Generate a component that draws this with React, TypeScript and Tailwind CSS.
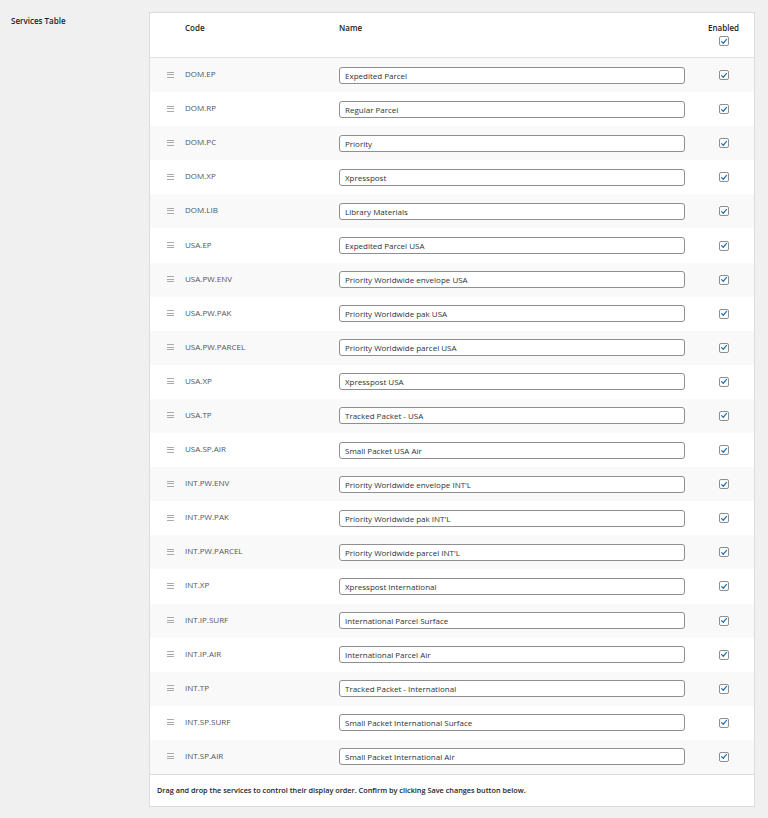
const services: [string, string][] = [
  ['DOM.EP', 'Expedited Parcel'],
  ['DOM.RP', 'Regular Parcel'],
  ['DOM.PC', 'Priority'],
  ['DOM.XP', 'Xpresspost'],
  ['DOM.LIB', 'Library Materials'],
  ['USA.EP', 'Expedited Parcel USA'],
  ['USA.PW.ENV', 'Priority Worldwide envelope USA'],
  ['USA.PW.PAK', 'Priority Worldwide pak USA'],
  ['USA.PW.PARCEL', 'Priority Worldwide parcel USA'],
  ['USA.XP', 'Xpresspost USA'],
  ['USA.TP', 'Tracked Packet - USA'],
  ['USA.SP.AIR', 'Small Packet USA Air'],
  ['INT.PW.ENV', "Priority Worldwide envelope INT'L"],
  ['INT.PW.PAK', "Priority Worldwide pak INT'L"],
  ['INT.PW.PARCEL', "Priority Worldwide parcel INT'L"],
  ['INT.XP', 'Xpresspost International'],
  ['INT.IP.SURF', 'International Parcel Surface'],
  ['INT.IP.AIR', 'International Parcel Air'],
  ['INT.TP', 'Tracked Packet - International'],
  ['INT.SP.SURF', 'Small Packet International Surface'],
  ['INT.SP.AIR', 'Small Packet International Air'],
];

function Check() {
  return (
    <span className="inline-flex w-[10px] h-[10px] items-center justify-center rounded-[2px] border border-[#8c8f94] bg-white">
      <svg viewBox="0 0 10 10" className="w-[9px] h-[9px]">
        <path d="M2 5.2 L4.1 7.2 L8.2 2.4" fill="none" stroke="#2271b1" strokeWidth={1.5} strokeLinecap="round" strokeLinejoin="round" />
      </svg>
    </span>
  );
}

function Handle() {
  return (
    <span className="flex flex-col gap-[1.5px] w-[7px]">
      <span className="h-px bg-[#a7aaad]" />
      <span className="h-px bg-[#a7aaad]" />
      <span className="h-px bg-[#a7aaad]" />
    </span>
  );
}

export default function App() {
  return (
    <div className="min-h-[818px] bg-[#f0f0f1] font-['Open_Sans',sans-serif] text-[8px] text-[#1d2327]">
      <div className="flex pt-3 pb-3">
        <div className="w-[149px] pl-[11px] pt-[3px] font-semibold text-[8px] text-[#1d2327]">Services Table</div>
        <div className="w-[606px] bg-white border border-[#dcdcde]">
          {/* Header */}
          <div className="grid grid-cols-[27px_154px_362px_61px] h-[45px] border-b border-[#e2e2e4]">
            <div />
            <div className="pl-2 pt-[9px] font-semibold">Code</div>
            <div className="pl-2 pt-[9px] font-semibold">Name</div>
            <div className="flex flex-col items-center pt-[9px] gap-[2px] font-semibold">
              <span>Enabled</span>
              <Check />
            </div>
          </div>

          {/* Rows */}
          {services.map(([code, name], i) => (
            <div
              key={code}
              className={`grid grid-cols-[27px_154px_362px_61px] h-[34.1px] items-center ${i % 2 === 0 ? 'bg-[#f9f9f9]' : 'bg-white'}`}
            >
              <div className="flex justify-end pr-[3px] pb-[1px]">
                <Handle />
              </div>
              <div className="pl-2 pb-[2px] text-[#50575e]">{code}</div>
              <div className="pl-2 pr-2">
                <input
                  readOnly
                  value={name}
                  className="w-[346px] h-[17px] px-[5px] bg-white border border-[#8c8f94] rounded-[3px] text-[8px] text-[#2c3338] outline-none"
                />
              </div>
              <div className="flex justify-center">
                <Check />
              </div>
            </div>
          ))}

          {/* Footer */}
          <div className="border-t border-[#dcdcde] h-[32px] flex items-center pl-[7px] font-semibold text-[7.3px] text-[#1d2327]">
            Drag and drop the services to control their display order. Confirm by clicking Save changes button below.
          </div>
        </div>
      </div>
    </div>
  );
}
